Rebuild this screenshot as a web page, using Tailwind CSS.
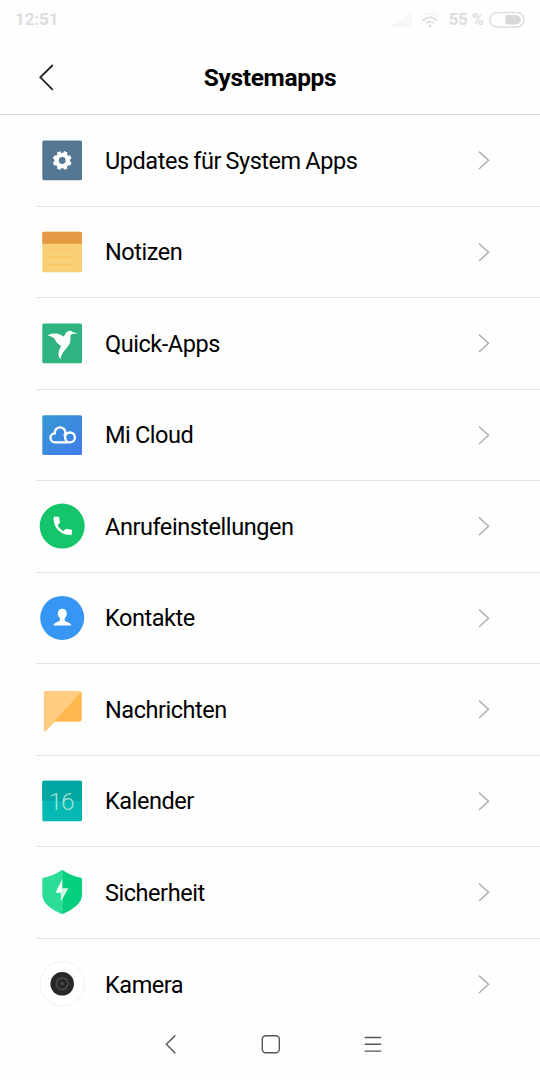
<!DOCTYPE html>
<html lang="de">
<head>
  <meta charset="UTF-8">
  <meta name="viewport" content="width=device-width, initial-scale=1.0">
  <title>Systemapps</title>
  <script src="https://cdn.jsdelivr.net/npm/@tailwindcss/browser@4"></script>
</head>
<body class="bg-[#fefefe] font-['Roboto',sans-serif] text-black">
  <div class="flex flex-col w-[540px] h-[1080px] overflow-hidden">
    <!-- Status bar -->
    <div class="flex shrink-0 items-center justify-between h-10 pl-[15px] pr-[15px] text-[#dcdddd] font-bold">
      <span class="text-[17px] tracking-[-0.1px]">12:51</span>
      <div class="flex items-center">
        <svg class="w-5 h-4 mr-[9px]" viewBox="0 0 20 16" fill="#f6f8f7"><path d="M0 15v-3h4v3zM4 15v-5h4v5zM8 15V7h4v8zM12 15V4h4v11zM16 15V1h4v14z"/></svg>
        <svg class="w-[18px] h-[16px] mr-[10px]" viewBox="0 0 18 16" fill="none" stroke="#dcdddd" stroke-width="1.8"><path d="M0 5.500a12.500 12.500 0 0 1 18 0" stroke="#f4f6f5"/><path d="M2 8.700a9 9 0 0 1 14 0M5.300 11.300a5 5 0 0 1 7.400 0"/><circle cx="9" cy="14" r="1.500" fill="#dcdddd" stroke="none"/></svg>
        <span class="text-[16.5px] mr-[5px]">55 %</span>
        <svg class="w-9 h-4" viewBox="0 0 36 16"><rect x=".8" y=".5" width="34.2" height="14.500" rx="7.200" fill="none" stroke="#dcdddd" stroke-width="1.400"/><path d="M17.500 3H27a4.700 4.700 0 0 1 0 9.400h-9.500a1 1 0 0 1-1-1V4a1 1 0 0 1 1-1z" fill="#d8d8d8"/></svg>
      </div>
    </div>

    <!-- Title bar -->
    <header class="grid grid-cols-[1fr_auto_1fr] shrink-0 items-center h-[75px] border-b border-[#dcdcdc]">
      <svg class="w-4 h-7 ml-[38px]" viewBox="0 0 16 28" fill="none" stroke="#222" stroke-width="1.8" stroke-linecap="round"><path d="M14.300 2.500 2.300 14.300l12 12"/></svg>
      <h1 class="pt-px text-[24.5px] leading-9 tracking-[-0.35px] font-bold">Systemapps</h1>
    </header>

    <!-- App list -->
    <ul id="apps" class="flex-1 overflow-hidden pl-9 text-[23.5px] tracking-[-0.45px] [word-spacing:-0.8px]">
      <li class="flex items-center h-[91.5px] border-b border-[#e2e2e2] pl-[3px]">
        <svg class="w-[46px] h-[46px]" viewBox="0 0 46 46">
          <rect x="3.3" y="3.500" width="39.7" height="39.7" rx="1.5" fill="#547793"/>
          <circle cx="23.2" cy="23.500" r="5.600" fill="none" stroke="#fff" stroke-width="4.400"/>
          <path d="M23.200 14.100v3M23.200 29.900v3M13.800 23.500h3M29.600 23.500h3M16.600 16.900l2 2M27.800 28.100l2 2M29.800 16.900l-2 2M18.600 28.100l-2 2" stroke="#fff" stroke-width="3.800" transform="rotate(22.5 23.2 23.5)"/>
        </svg>
        <span class="ml-5 pt-0.5">Updates für System Apps</span>
      </li>
      <li class="flex items-center h-[91.5px] border-b border-[#e2e2e2] pl-[3px]">
        <svg class="w-[46px] h-[46px]" viewBox="0 0 46 46">
          <rect x="3.3" y="2.700" width="39.7" height="40.500" rx="1.5" fill="#f8cf74"/>
          <path d="M3.300 14.700V4.200a1.500 1.500 0 0 1 1.500-1.500h36.700A1.500 1.500 0 0 1 43 4.200v10.500z" fill="#e79a45"/>
          <path d="M8.500 20.500h29M8.500 27.700h29M8.500 35.500h29" stroke="#fcc35e" stroke-width="1"/>
        </svg>
        <span class="ml-5 pt-0.5">Notizen</span>
      </li>
      <li class="flex items-center h-[91.5px] border-b border-[#e2e2e2] pl-[3px]">
        <svg class="w-[46px] h-[46px]" viewBox="0 0 46 46">
          <rect x="3.3" y="3.500" width="39.700" height="39.700" rx="1.500" fill="#2fb380"/>
          <path d="M8.300 15.600C11 13.500 15 13 18.500 13.700c2.600.6 4 2 6.300 2.700 1.300-1.800 2-4.600 4.700-5.400 1.700-.5 2.900.1 3.900 1l5.300 1.500-5.300.5c-2.200.4-2 2.700-1.900 4.800.2 4-1.700 7-4.200 9.700-2.700 2.900-5 5.800-5.900 10.900-2.200-2.500-2.400-6.200-1.200-9.300.9-2.100 1.900-3 1.500-4.600-1.900-.8-4.100-2.700-5.200-5-1.200-2.700-4-4.400-8.200-4.900z" fill="#fff"/>
        </svg>
        <span class="ml-5 pt-0.5">Quick-Apps</span>
      </li>
      <li class="flex items-center h-[91.5px] border-b border-[#e2e2e2] pl-[3px]">
        <svg class="w-[46px] h-[46px]" viewBox="0 0 46 46">
          <defs><linearGradient id="cloud" x1="0" y1="0" x2="1" y2="1"><stop offset="0" stop-color="#3598d2"/><stop offset="1" stop-color="#437cec"/></linearGradient></defs>
          <rect x="3.300" y="3.300" width="39.700" height="39.700" rx="1.500" fill="url(#cloud)"/>
          <path d="M31 30.300H16.200a4.500 4.500 0 0 1-.5-9c-.2-7.900 11-7.600 10.700-.3-.1 1-.4 1.700-1 2.400M31 30.300a4.900 4.900 0 1 0-4.900-4.900c0 1.800.7 3.300 2 4.200" fill="none" stroke="#fff" stroke-width="2.300" stroke-linecap="round"/>
        </svg>
        <span class="ml-5 pt-0.5">Mi Cloud</span>
      </li>
      <li class="flex items-center h-[91.5px] border-b border-[#e2e2e2] pl-[3px]">
        <svg class="w-[46px] h-[46px]" viewBox="0 0 46 46">
          <circle cx="23.200" cy="23.100" r="22.500" fill="#14c56b"/>
          <path d="M14.800 13.800h5.200l1 6-2.300 2.200c1.200 2.900 3 4.700 5.700 6l2.500-2.200 6 .9v5.200c-10.500 1.200-19.700-7.500-18.100-18.100z" fill="#fff"/>
        </svg>
        <span class="ml-5 pt-0.5">Anrufeinstellungen</span>
      </li>
      <li class="flex items-center h-[91.5px] border-b border-[#e2e2e2] pl-[3px]">
        <svg class="w-[46px] h-[46px]" viewBox="0 0 46 46">
          <circle cx="23.200" cy="22.900" r="22" fill="#3796f3"/>
          <path d="M23.300 13.700c3 0 4.500 1.800 4.300 4.500.5.300.5 1.800-.3 2.200-.3 1.400-.9 2.100-1.600 2.700v2.300c1 1.500 6.600 2 6.600 5.200H14.500c0-3.200 5.500-3.700 6.400-5.200v-2.300c-.7-.6-1.300-1.300-1.600-2.700-.8-.4-.8-1.900-.3-2.200-.2-2.700 1.300-4.500 4.300-4.500z" fill="#fff"/>
        </svg>
        <span class="ml-5 pt-0.5">Kontakte</span>
      </li>
      <li class="flex items-center h-[91.5px] border-b border-[#e2e2e2] pl-[3px]">
        <svg class="w-[46px] h-[46px]" viewBox="0 0 46 46">
          <path d="M6.500 5h34.300a1.800 1.800 0 0 1 1.800 1.800v26.800a1.800 1.800 0 0 1-1.800 1.800H16.300l-9.500 9.500c-.9.900-2 .4-2-.9V6.800A1.800 1.800 0 0 1 6.500 5z" fill="#ffcc80"/>
          <path d="M42.300 5.800c.2.300.3.600.3 1v26.800a1.800 1.800 0 0 1-1.800 1.800H16.300l-1.800.9z" fill="#ffb84d"/>
        </svg>
        <span class="ml-5 pt-0.5">Nachrichten</span>
      </li>
      <li class="flex items-center h-[91.5px] border-b border-[#e2e2e2] pl-[3px]">
        <svg class="w-[46px] h-[46px]" viewBox="0 0 46 46">
          <rect x="3.300" y="2.800" width="39.700" height="40.500" rx="1.500" fill="#04b9b3"/>
          <path d="M3.300 23V4.300a1.500 1.500 0 0 1 1.500-1.500h36.700A1.500 1.500 0 0 1 43 4.300V23z" fill="#00a6a2"/>
          <text x="22" y="32" text-anchor="middle" class="text-[24.5px] tracking-[-1.3px] font-light" fill="#9fe3d6">16</text>
        </svg>
        <span class="ml-5 pt-0.5">Kalender</span>
      </li>
      <li class="flex items-center h-[91.5px] border-b border-[#e2e2e2] pl-[3px]">
        <svg class="w-[46px] h-[46px]" viewBox="0 0 46 46">
          <path d="M23.200.8C18 4.800 11 7.600 4.500 8.800a1.500 1.500 0 0 0-1.200 1.500v15c0 10 10 15.500 19.900 20z" fill="#2bde97"/>
          <path d="M23.200.8c5.200 4 12.200 6.800 18.700 8a1.500 1.500 0 0 1 1.200 1.500v15c0 10-10 15.500-19.900 20z" fill="#06cf7f"/>
          <path d="M23.200 10.300v13.400h-6.700z" fill="#fff"/>
          <path d="M23.200 19.200h6.200l-7.500 13.200V23.700h1.300z" fill="#d2f8e7"/>
        </svg>
        <span class="ml-5 pt-0.5">Sicherheit</span>
      </li>
      <li class="flex items-center h-[91.5px] pl-[3px]">
        <svg class="w-[46px] h-[46px]" viewBox="0 0 46 46">
          <circle cx="23.200" cy="22.800" r="22.200" fill="#fff" stroke="#ececec" stroke-width=".8"/>
          <circle cx="23.200" cy="22.800" r="11.800" fill="#272727"/>
          <circle cx="23.200" cy="22.800" r="5.800" fill="#272727" stroke="#484848" stroke-width="1.800"/>
          <circle cx="23.200" cy="22.800" r="1.500" fill="#555"/>
        </svg>
        <span class="ml-5 pt-0.5">Kamera</span>
      </li>
    </ul>

    <!-- Navigation bar -->
    <nav class="flex shrink-0 items-center h-[73px] pl-[164px] text-[#555]">
      <svg class="w-3 h-5" viewBox="0 0 12 20" fill="none" stroke="currentColor" stroke-width="1.400"><path d="M11.300 1.500 2.300 10.300l9 9"/></svg>
      <svg class="w-5 h-5 ml-[85px]" viewBox="0 0 20 20" fill="none" stroke="currentColor" stroke-width="1.400"><rect x="1.300" y="1.800" width="17" height="17" rx="3.500"/></svg>
      <svg class="w-[18px] h-5 ml-[83px]" viewBox="0 0 18 20" fill="none" stroke="currentColor" stroke-width="1.400"><path d="M.7 3.500h16.500M.7 10.300h16.500M.7 17.100h16.500"/></svg>
    </nav>
  </div>

  <template id="chevron">
    <svg class="w-3 h-5 ml-auto mr-[50px]" viewBox="0 0 12 20" fill="none" stroke="#b0b0b0" stroke-width="1.500"><path d="m1 1.600 9.500 8.700L1 19"/></svg>
  </template>

  <script>
    const chevron = document.getElementById('chevron');

    document.querySelectorAll('#apps li').forEach(row => {
      row.appendChild(chevron.content.cloneNode(true));
    });
  </script>
</body>
</html>
